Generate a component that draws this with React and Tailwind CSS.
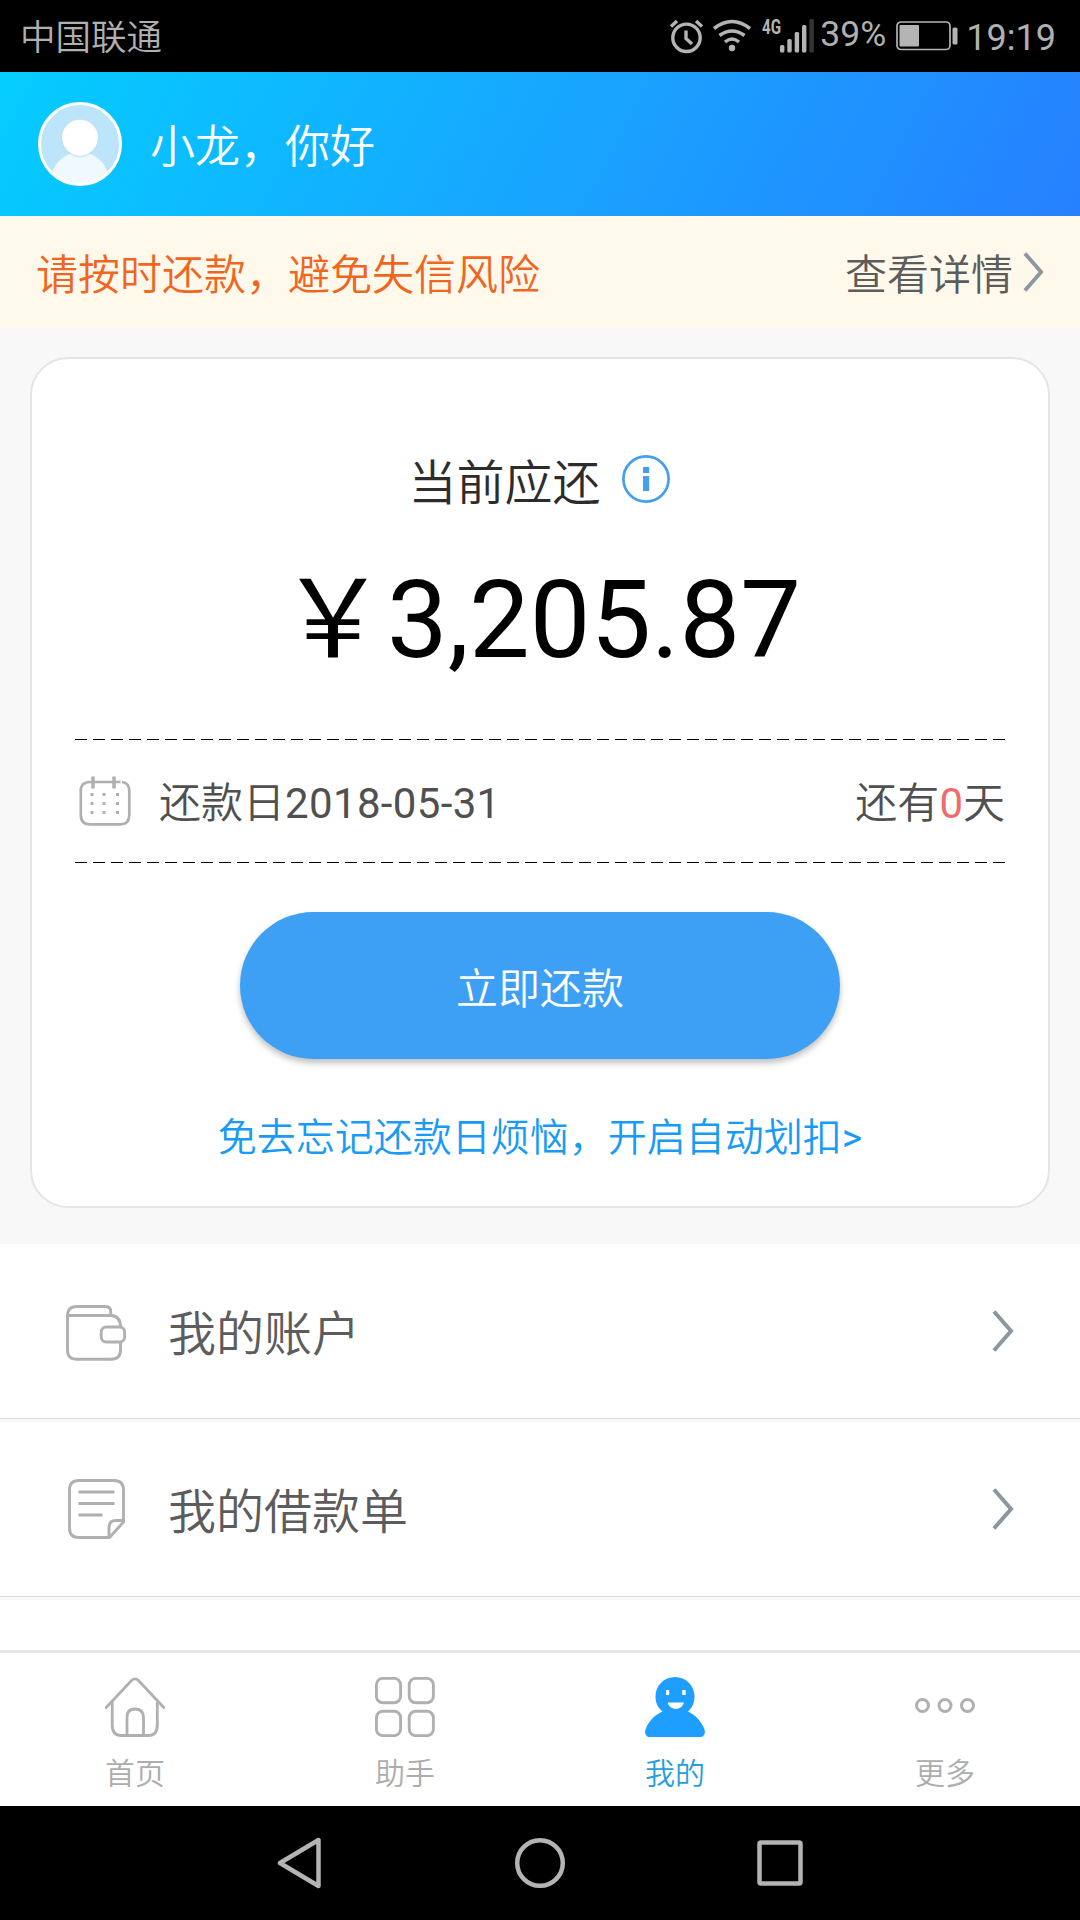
import React from "react";

const Chevron = ({ className = "" }) => (
  <svg viewBox="0 0 22 42" fill="none" stroke="#8a979f" strokeWidth="4" className={className}>
    <path d="M2 1.5 19 21 2 40.5" />
  </svg>
);

const StatusBar = () => (
  <div className="flex h-[72px] items-center justify-between bg-black pl-5 pr-6 text-[36px] leading-none text-[#b0b0b0]">
    <span className="pt-1.5 text-[35.5px] font-[350]">中国联通</span>
    <div className="flex items-center">
      <svg width="146" height="72" viewBox="669 0 146 72" fill="none" stroke="#b4b4b4" strokeWidth="3.4">
        <circle cx="686.5" cy="37.8" r="13.7" />
        <path d="M686 30.500V38.500L692 44M671 26.500 677 21M696 21 702 26.500" />
        <path d="M714 28.500Q732 14.500 750 28.500M719.500 35.500Q732 26.500 744.500 35.500M725 42Q732 36 739 42" strokeWidth="3.600" />
        <circle cx="732" cy="48" r="3.200" fill="#b4b4b4" stroke="none" />
        <g fill="#b4b4b4" stroke="none">
          <rect x="780" y="45" width="4.400" height="7.500" rx="1.500" />
          <rect x="787.300" y="39" width="4.400" height="13.500" rx="1.500" />
          <rect x="794.700" y="32" width="4.400" height="20.500" rx="1.500" />
          <rect x="802" y="25" width="4.400" height="27.500" rx="1.500" />
          <rect x="809.300" y="19" width="4.600" height="33.500" rx="1.500" fill="#333" />
          <text x="762" y="34" fontSize="20" fontWeight="700" fontFamily="Roboto" textLength="19" lengthAdjust="spacingAndGlyphs">4G</text>
        </g>
      </svg>
      <span className="ml-[5px] w-[68px] pb-0.5 text-[35.5px]">39%</span>
      <svg width="62" height="30" viewBox="0 0 62 30" className="ml-2" fill="none" stroke="#b4b4b4">
        <rect x="1" y="1" width="53" height="27.500" rx="4" strokeWidth="1.700" />
        <rect x="3.500" y="4" width="19.500" height="21.500" rx="1" fill="#b4b4b4" stroke="none" />
        <rect x="56.500" y="6.500" width="5" height="17" rx="1.500" fill="#b4b4b4" stroke="none" />
      </svg>
      <span className="ml-2 pt-1">19:19</span>
    </div>
  </div>
);

const Avatar = () => (
  <svg width="84" height="84" viewBox="0 0 84 84">
    <defs>
      <clipPath id="avatar">
        <circle cx="42" cy="42" r="40" />
      </clipPath>
    </defs>
    <circle cx="42" cy="42" r="40" fill="#bce5fc" />
    <g clipPath="url(#avatar)">
      <circle cx="42" cy="79" r="29" fill="#f0f9ff" />
      <circle cx="42" cy="37" r="18.500" fill="#a5d6f3" opacity="0.4" />
    </g>
    <circle cx="42" cy="35.700" r="18" fill="#fff" />
    <circle cx="42" cy="42" r="40.500" fill="none" stroke="#fff" strokeWidth="3" />
  </svg>
);

const CalendarIcon = () => (
  <svg width="52" height="50" viewBox="0 0 52 50" fill="none" stroke="#b0b0b0" strokeWidth="2.700">
    <path d="M41.500 6H11Q1.800 6 1.800 15V39Q1.800 48.300 11 48.300H41.500Q50.300 48.300 50.300 39V15Q50.300 7 43 6" />
    <path d="M14 .5V12.500M35 .5V12.500" strokeWidth="3.500" />
    <path d="M11.500 18.500h3M23.500 18.500h3M37 18.500h3M11.500 27.500h3M23.500 27.500h3M37 27.500h3M11.500 36.500h3M23.500 36.500h3M37 36.500h3" strokeWidth="3" />
  </svg>
);

const WalletIcon = () => (
  <svg width="60" height="56" viewBox="0 0 60 56" className="mt-[3px]" fill="none" stroke="#b0b0b0" strokeWidth="2.900">
    <path d="M1.500 11Q1.500 1.500 11 1.500H39.500Q44.700 1.500 44.700 6.500V11" />
    <path d="M1.500 10.500H45Q54.500 11 54.500 22M54.500 37V45Q54.500 54.300 45 54.300H11Q1.500 54.300 1.500 45V10" />
    <rect x="35.200" y="22" width="23.400" height="15" rx="5" />
  </svg>
);

const BillIcon = () => (
  <svg width="58" height="60" viewBox="0 0 58 60" className="ml-[1.5px]" fill="none" stroke="#b0b0b0" strokeWidth="2.900">
    <path d="M41.500 58.500H11Q1.500 58.500 1.500 49V11Q1.500 1.500 11 1.500H46Q55.500 1.500 55.500 11V43Z" />
    <path d="M41 58V49Q41 41.500 47.500 41.500H56M10.500 13H46.500M10.500 24.500H46.500M10.500 36H34.500" />
  </svg>
);

const HomeIcon = () => (
  <svg width="60" height="60" viewBox="0 0 60 60" fill="none" stroke="#b0b0b0" strokeWidth="2.800">
    <path d="M1.200 30.500 26.500 3.500Q30 .2 33.500 3.500L58.800 30.500" strokeLinecap="round" />
    <path d="M7.200 25V48Q7.200 58.500 16.500 58.500H43.500Q52.300 58.500 52.300 48V25M22 58.500V40Q22 32 30 32T38.500 40V58.500" />
  </svg>
);

const GridIcon = () => (
  <svg width="60" height="60" viewBox="0 0 60 60" fill="none" stroke="#b0b0b0" strokeWidth="2.900">
    <rect x="1.400" y="1.400" width="24.200" height="24.400" rx="6.500" />
    <rect x="34.200" y="1.400" width="24.200" height="24.400" rx="6.500" />
    <rect x="1.400" y="34.200" width="24.200" height="24.400" rx="6.500" />
    <rect x="34.200" y="34.200" width="24.200" height="24.400" rx="6.500" />
  </svg>
);

const MineIcon = () => (
  <svg width="60" height="60" viewBox="0 0 60 60" fill="#1e9fff">
    <path d="M30 0C41 0 49.500 8.500 49.500 19.500 49.500 26 47 31 43 34.500 50.500 38 56.500 44.500 59.500 52.500 60.700 56.500 59 60 55 60H5C1 60-.7 56.500.5 52.500 3.500 44.500 9.500 38 17.500 34.500 13 31 10.500 26 10.500 19.500 10.500 8.500 19 0 30 0Z" />
    <path d="M21 13h3.200v5H21ZM37.200 13h3.500v5h-3.500ZM22.500 25.500H39Q37 32 30.800 32T22.500 25.500Z" fill="#fff" />
  </svg>
);

const MoreIcon = () => (
  <svg width="60" height="60" viewBox="0 0 60 60" fill="none" stroke="#b0b0b0" strokeWidth="3">
    <circle cx="7.500" cy="28.500" r="6" />
    <circle cx="30" cy="28.500" r="6" />
    <circle cx="52.500" cy="28.500" r="6" />
  </svg>
);

const DashedLine = () => (
  <div className="h-px w-full bg-[repeating-linear-gradient(to_right,#000_0_12px,transparent_12px_18px)]" />
);

const MenuRow = ({ icon, label }) => (
  <div className="flex h-[178px] shrink-0 flex-col">
    <div className="flex flex-1 items-center bg-white pl-[66px] pr-[66px]">
      <div className="w-[102px]">{icon}</div>
      <span className="pt-[7px] text-5xl font-[350] text-[#5c5c5c]">{label}</span>
      <Chevron className="ml-auto h-[42px] w-[22px]" />
    </div>
    <div className="h-px bg-[#dcdcdc]" />
    <div className="h-[3px] bg-[#f8f8f8]" />
  </div>
);

const tabs = [
  { label: "首页", icon: <HomeIcon /> },
  { label: "助手", icon: <GridIcon /> },
  { label: "我的", icon: <MineIcon />, active: true },
  { label: "更多", icon: <MoreIcon /> },
];

const App = () => {
  return (
    <div className="flex h-[1920px] w-[1080px] flex-col overflow-hidden bg-white font-[Roboto,'Noto_Sans_CJK_SC',sans-serif]">
      <StatusBar />

      <header className="flex h-36 items-center bg-[linear-gradient(118deg,#04cdff_0%,#17a6ff_50%,#2680ff_100%)] pl-[38px]">
        <Avatar />
        <h1 className="ml-7 pt-[7px] text-[45px] font-[350] leading-none text-white">小龙，你好</h1>
      </header>

      <div className="flex h-28 items-center justify-between bg-[#fff9ec] pl-9 pr-9 text-[42px] font-[350] leading-none">
        <span className="pt-[7px] text-[#f0661f]">请按时还款，避免失信风险</span>
        <div className="flex items-center text-[#5c5c5c]">
          <span className="pt-[7px]">查看详情</span>
          <Chevron className="ml-2.5 h-10 w-[21px]" />
        </div>
      </div>

      <main className="h-[916px] bg-[#f8f8f8] px-[30px] pt-[29px]">
        <section className="flex h-[851px] flex-col items-center rounded-[38px] border-2 border-[#e5e5e5] bg-white px-[43px]">
          <div className="mt-[96px] mr-0.5 flex h-12 items-center">
            <h2 className="pt-2.5 text-5xl font-[350] leading-none text-[#2c2c2c]">当前应还</h2>
            <svg width="48" height="48" viewBox="0 0 48 48" className="ml-[21px]" fill="#459fee">
              <circle cx="24" cy="24" r="22.600" fill="none" stroke="#459fee" strokeWidth="2.700" />
              <path d="M21 12h6.200v6H21ZM21 21h6.200v15H21Z" />
            </svg>
          </div>
          <p className="mt-[63px] text-[108px] leading-none text-black">￥3,205.87</p>

          <div className="mt-[65px] w-full">
            <DashedLine />
            <div className="flex h-[122px] items-center pl-1 text-[42px] leading-none text-[#505050]">
              <CalendarIcon />
              <span className="ml-7 pt-1.5 font-[350]">
                还款日<span className="font-normal tracking-[0.35px]">2018-05-31</span>
              </span>
              <span className="ml-auto pt-[5px] font-[350]">
                还有<span className="font-normal text-[#f06c6c]">0</span>天
              </span>
            </div>
            <DashedLine />
          </div>

          <button
            type="button"
            className="mt-[49px] h-[147px] w-[600px] shrink-0 rounded-full bg-[#3ea0f5] pt-2 text-[42px] font-[350] text-white shadow-[0_4px_6px_rgba(0,0,0,0.25)]"
          >
            立即还款
          </button>
          <a className="mt-[60px] text-[39px] font-[350] leading-none text-[#189bf5]">
            免去忘记还款日烦恼，开启自动划扣<span className="font-normal">&gt;</span>
          </a>
        </section>
      </main>

      <div className="flex h-[406px] flex-col overflow-hidden">
        <MenuRow icon={<WalletIcon />} label="我的账户" />
        <MenuRow icon={<BillIcon />} label="我的借款单" />
      </div>

      <nav className="flex h-[156px] border-t-[3px] border-[#e7e7e7] bg-white">
        {tabs.map((tab) => (
          <div key={tab.label} className="flex flex-1 flex-col items-center pt-6">
            {tab.icon}
            <span
              className={`mt-[22px] text-[30px] font-[350] leading-none ${tab.active ? "text-[#2a9edb]" : "text-[#adadad]"}`}
            >
              {tab.label}
            </span>
          </div>
        ))}
      </nav>

      <div className="flex h-[114px] items-center justify-center gap-[191px] bg-black">
        <svg width="46" height="52" viewBox="0 0 46 52" fill="none" stroke="#b4b4b4" strokeWidth="4.500" strokeLinejoin="round">
          <path d="M3 26 41.500 3V49Z" />
        </svg>
        <svg width="52" height="52" viewBox="0 0 52 52" fill="none" stroke="#b4b4b4" strokeWidth="4.500">
          <circle cx="26" cy="26" r="22.800" />
        </svg>
        <svg width="46" height="46" viewBox="0 0 46 46" fill="none" stroke="#b4b4b4" strokeWidth="4.500">
          <rect x="2.500" y="2.500" width="41" height="41" rx="1.500" />
        </svg>
      </div>
    </div>
  );
};

export default App;
